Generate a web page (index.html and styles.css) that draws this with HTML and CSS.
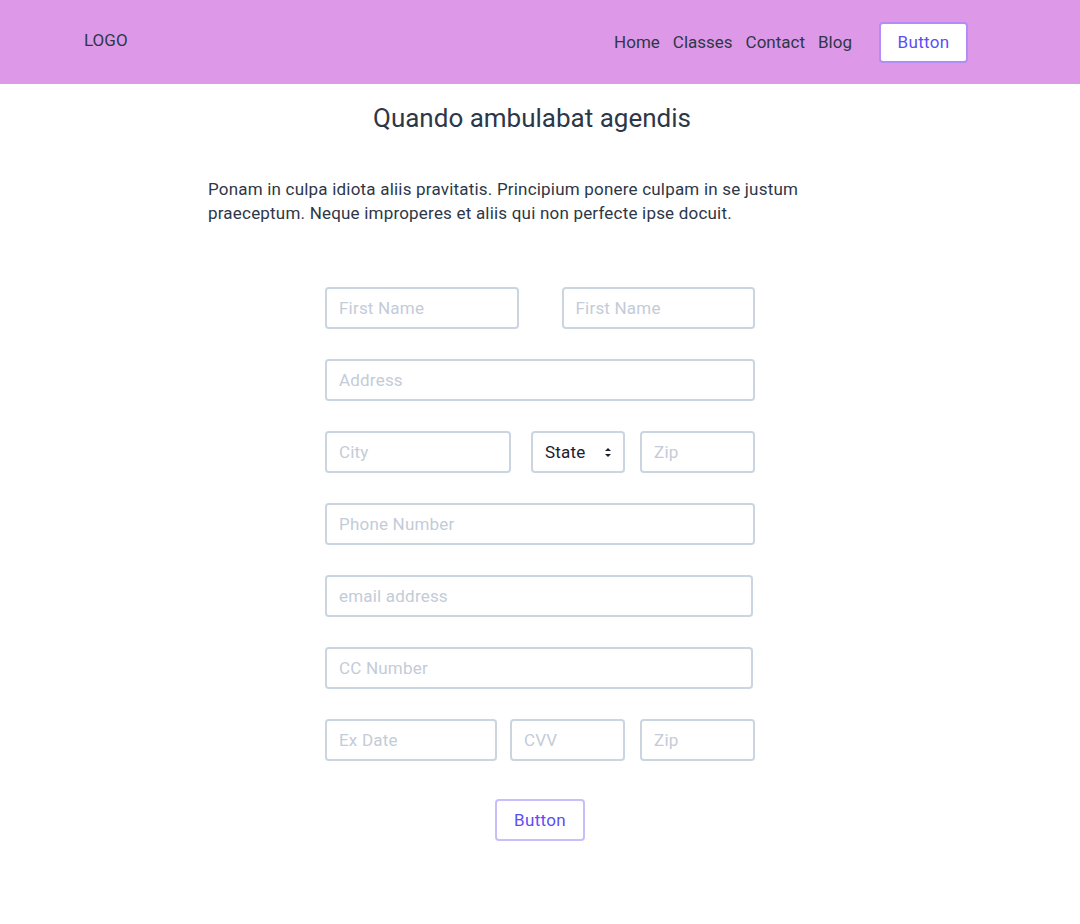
FILE: index.html
```html
<!DOCTYPE html>
<html lang="en">
<head>
<meta charset="utf-8">
<title>Form</title>
<link rel="stylesheet" href="styles.css">
</head>
<body>
<header class="topbar">
  <div class="logo">LOGO</div>
  <nav class="nav">
    <a href="#">Home</a>
    <a href="#">Classes</a>
    <a href="#">Contact</a>
    <a href="#">Blog</a>
    <button class="btn btn-nav">Button</button>
  </nav>
</header>
<main class="main">
  <h1 class="title">Quando ambulabat agendis</h1>
  <p class="lead">Ponam in culpa idiota aliis pravitatis. Principium ponere culpam in se justum praeceptum. Neque improperes et aliis qui non perfecte ipse docuit.</p>
  <form class="form">
    <div class="row row-names">
      <input class="field" placeholder="First Name">
      <input class="field" placeholder="First Name">
    </div>
    <div class="row">
      <input class="field" placeholder="Address">
    </div>
    <div class="row row-city">
      <input class="field" placeholder="City">
      <div class="select">State<span class="arrows"></span></div>
      <input class="field" placeholder="Zip">
    </div>
    <div class="row">
      <input class="field" placeholder="Phone Number">
    </div>
    <div class="row row-short">
      <input class="field" placeholder="email address">
    </div>
    <div class="row row-short">
      <input class="field" placeholder="CC Number">
    </div>
    <div class="row row-card">
      <input class="field" placeholder="Ex Date">
      <input class="field" placeholder="CVV">
      <input class="field" placeholder="Zip">
    </div>
    <div class="submit-row">
      <button type="button" class="btn btn-submit">Button</button>
    </div>
  </form>
</main>
</body>
</html>
```
FILE: styles.css
```css
* { box-sizing: border-box; }
body {
  margin: 0;
  font-family: Roboto, "Noto Sans", sans-serif;
  color: #2d3748;
  background: #fff;
}
.topbar {
  height: 84px;
  background: #dd99e8;
  display: flex;
  align-items: center;
  justify-content: space-between;
  padding: 0 112px 0 84px;
}
.logo {
  font-size: 17px;
  margin-top: -4px;
  color: #2d3748;
}
.nav {
  display: flex;
  align-items: center;
  gap: 13px;
}
.nav a {
  color: #2d3748;
  text-decoration: none;
  font-size: 17px;
}
.btn {
  font-family: inherit;
  font-size: 17px;
  letter-spacing: 0.3px;
  color: #5b4ef5;
  background: #fff;
  border-radius: 4px;
  cursor: pointer;
}
.btn-nav {
  margin-left: 14px;
  width: 89px;
  height: 41px;
  border: 2px solid #b48cf5;
}
.main {
  width: 680px;
  margin: 0 auto;
  padding-top: 17px;
}
.title {
  margin: 0;
  text-align: center;
  font-weight: 400;
  font-size: 26px;
  line-height: 34px;
  color: #2d3748;
  padding-right: 16px;
}
.lead {
  margin: 42px 0 0;
  padding: 0 8px;
  font-size: 17px;
  letter-spacing: 0.2px;
  line-height: 24px;
  color: #2d3748;
}
.form {
  width: 430px;
  margin: 62px auto 0;
  display: flex;
  flex-direction: column;
  gap: 30px;
}
.row {
  display: flex;
  height: 42px;
}
.field, .select {
  height: 42px;
  border: 2px solid #cbd5e0;
  border-radius: 4px;
  padding: 0 12px;
  font-family: inherit;
  font-size: 17px;
  letter-spacing: 0.2px;
  color: #2d3748;
  background: #fff;
  min-width: 0;
}
.field::placeholder { color: #c3ccd8; }
.row > .field { flex: 1 1 0; }
.row-names { gap: 43px; }
.row-short { width: 428px; }
.row-city .field:first-child { flex: 0 0 186px; }
.row-city .select { margin-left: 20px; flex: 0 0 94px; }
.row-city .field:last-child { margin-left: 15px; flex: 0 0 115px; }
.row-card .field:nth-child(1) { flex: 0 0 172px; }
.row-card .field:nth-child(2) { margin-left: 13px; flex: 0 0 115px; }
.row-card .field:nth-child(3) { margin-left: 15px; flex: 0 0 115px; }
.select {
  display: flex;
  align-items: center;
  justify-content: space-between;
  color: #1a202c;
}
.arrows {
  position: relative;
  width: 6px;
  height: 9px;
}
.arrows::before, .arrows::after {
  content: "";
  position: absolute;
  left: 0;
  border-left: 3px solid transparent;
  border-right: 3px solid transparent;
}
.arrows::before { top: 0; border-bottom: 3.5px solid #1a202c; }
.arrows::after { bottom: 0; border-top: 3.5px solid #1a202c; }
.submit-row {
  display: flex;
  justify-content: center;
  margin-top: 8px;
}
.btn-submit {
  width: 90px;
  height: 42px;
  border: 2px solid #c9bdfb;
}
```
